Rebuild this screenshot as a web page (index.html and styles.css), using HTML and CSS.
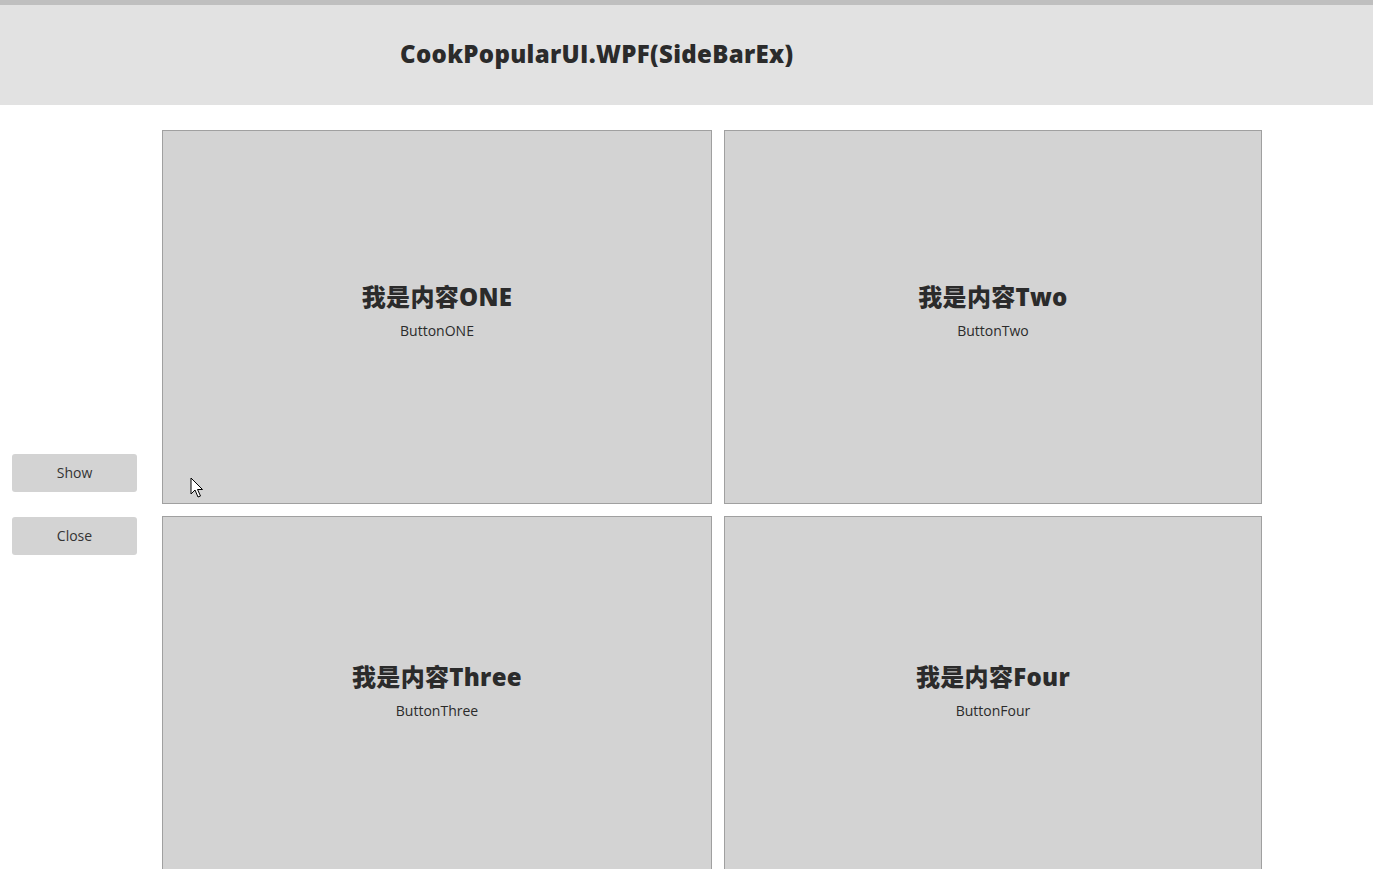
FILE: index.html
```html
<!DOCTYPE html>
<html lang="zh">
<head>
<meta charset="utf-8">
<title>CookPopularUI.WPF(SideBarEx)</title>
<link rel="stylesheet" href="styles.css">
</head>
<body>
<div class="window">
  <header class="header">
    <h1 class="title">CookPopularUI.WPF(SideBarEx)</h1>
  </header>
  <main class="main">
    <aside class="sidebar">
      <button class="btn">Show</button>
      <button class="btn">Close</button>
    </aside>
    <section class="grid">
      <div class="card">
        <div class="card-title">我是内容ONE</div>
        <div class="card-sub">ButtonONE</div>
        <svg class="cursor" width="14" height="22" viewBox="0 0 14 22"><path d="M1 1 L1 17 L5 13 L8 20 L10.5 19 L7.5 12.5 L12.5 12.5 Z" fill="#fff" stroke="#000" stroke-width="1" stroke-linejoin="miter"/></svg>
      </div>
      <div class="card">
        <div class="card-title">我是内容Two</div>
        <div class="card-sub">ButtonTwo</div>
      </div>
      <div class="card">
        <div class="card-title">我是内容Three</div>
        <div class="card-sub">ButtonThree</div>
      </div>
      <div class="card">
        <div class="card-title">我是内容Four</div>
        <div class="card-sub">ButtonFour</div>
      </div>
    </section>
  </main>
</div>
</body>
</html>
```

FILE: styles.css
```css
html, body {
  margin: 0;
  padding: 0;
  background: #ffffff;
  overflow: hidden;
}
body {
  font-family: "Open Sans", "Noto Sans", "Noto Sans CJK SC", sans-serif;
  color: #2b2b2b;
}
.window {
  width: 1373px;
  height: 869px;
  overflow: hidden;
  border-top: 5px solid #bfbfbf;
  box-sizing: border-box;
}
.header {
  height: 100px;
  background: #e2e2e2;
  display: flex;
  align-items: center;
  padding-left: 400px;
  box-sizing: border-box;
}
.title {
  margin: -3px 0 0 0;
  font-size: 24px;
  font-weight: 800;
  letter-spacing: 0.33px;
  color: #2b2b2b;
}
.main {
  display: flex;
}
.sidebar {
  width: 162px;
  flex: none;
  display: flex;
  flex-direction: column;
  gap: 25px;
  padding: 349px 0 0 12px;
  box-sizing: border-box;
}
.btn {
  width: 125px;
  height: 38px;
  border: none;
  border-radius: 3px;
  background: #d3d3d3;
  color: #333;
  font-family: "Open Sans", "Noto Sans", sans-serif;
  font-size: 14px;
  padding: 0 0 2px 0;
}
.grid {
  margin-top: 25px;
  display: grid;
  grid-template-columns: 550px 538px;
  grid-template-rows: 374px 362px;
  gap: 12px;
}
.card {
  position: relative;
  background: #d3d3d3;
  border: 1px solid #a0a0a0;
  box-sizing: border-box;
  display: flex;
  flex-direction: column;
  align-items: center;
  justify-content: center;
  padding-bottom: 12px;
}
.card-title {
  font-family: "Open Sans", "Noto Sans CJK SC", sans-serif;
  font-size: 24px;
  font-weight: 800;
  line-height: 32px;
  letter-spacing: 0.3px;
  color: #2b2b2b;
}
.card-sub {
  font-size: 14px;
  line-height: 20px;
  margin-top: 8px;
  color: #2b2b2b;
}
.cursor {
  position: absolute;
  left: 27px;
  top: 346px;
}
```
